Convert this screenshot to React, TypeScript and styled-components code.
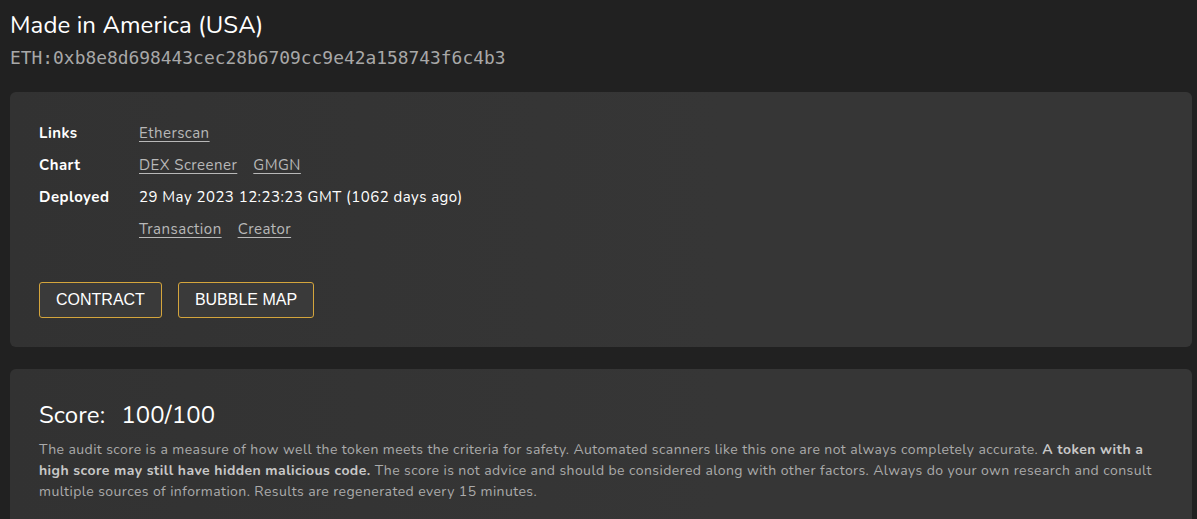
import React from "react";
import styled, { createGlobalStyle } from "styled-components";

const Global = createGlobalStyle`
  html, body { margin: 0; padding: 0; background: #212121; }
  body { font-family: "Nunito", "Lato", "Noto Sans", sans-serif; color: #fff; }
`;

const Page = styled.div`
  padding: 9px 5px 0 10px;
  display: flex;
  flex-direction: column;
`;

const Title = styled.h1`
  margin: 0;
  font-size: 24px;
  font-weight: 400;
  line-height: 32px;
  letter-spacing: 0.1px;
  color: #fff;
`;

const Address = styled.div`
  font-family: "DejaVu Sans Mono", monospace;
  font-size: 17.9px;
  line-height: 24px;
  color: #a8a8a8;
  margin-top: 5px;
`;

const Card = styled.section<{ $top: number }>`
  margin-top: ${(p) => p.$top}px;
  background: linear-gradient(90deg, #323232 0%, #363636 60%, #363636 100%);
  border-radius: 6px;
  padding: 25px 29px 29px;
`;

const Table = styled.div`
  display: grid;
  grid-template-columns: 100px 1fr;
  grid-auto-rows: 32px;
  align-items: center;
  font-size: 15px;
  letter-spacing: 0.47px;
`;

const Label = styled.div`
  font-weight: 700;
  color: #fff;
`;

const Value = styled.div`
  display: flex;
  gap: 16px;
  color: #fff;
`;

const Link = styled.a`
  color: #b8b8b8;
  text-decoration: underline;
  text-underline-offset: 3px;
  cursor: pointer;
`;

const Buttons = styled.div`
  display: flex;
  gap: 16px;
  margin-top: 37px;
`;

const Button = styled.button`
  font-family: "Liberation Sans", Arial, sans-serif;
  font-size: 16px;
  color: #fff;
  background: #3a3a3a;
  border: 1px solid #d4a53c;
  border-radius: 3px;
  height: 36px;
  padding: 0 16px;
  cursor: pointer;
`;

const ScoreCard = styled(Card)`
  padding-top: 31px;
  flex: 1;
`;

const Score = styled.div`
  display: flex;
  gap: 16px;
  font-size: 24px;
  line-height: 30px;
  letter-spacing: 0.1px;
`;

const Paragraph = styled.p`
  margin: 9px 0 0;
  font-size: 14px;
  line-height: 21px;
  letter-spacing: 0.42px;
  color: #ababab;
  b { color: #c8c8c8; }
`;

export default function App() {
  return (
    <>
      <Global />
      <Page>
        <Title>Made in America (USA)</Title>
        <Address>ETH:0xb8e8d698443cec28b6709cc9e42a158743f6c4b3</Address>
        <Card $top={22}>
          <Table>
            <Label>Links</Label>
            <Value><Link>Etherscan</Link></Value>
            <Label>Chart</Label>
            <Value><Link>DEX Screener</Link><Link>GMGN</Link></Value>
            <Label>Deployed</Label>
            <Value>29 May 2023 12:23:23 GMT (1062 days ago)</Value>
            <div />
            <Value><Link>Transaction</Link><Link>Creator</Link></Value>
          </Table>
          <Buttons>
            <Button>CONTRACT</Button>
            <Button>BUBBLE MAP</Button>
          </Buttons>
        </Card>
        <ScoreCard $top={22}>
          <Score><span>Score:</span><span>100/100</span></Score>
          <Paragraph>
            The audit score is a measure of how well the token meets the criteria for safety. Automated scanners like this one are not always completely accurate. <b>A token with a high score may still have hidden malicious code.</b> The score is not advice and should be considered along with other factors. Always do your own research and consult multiple sources of information. Results are regenerated every 15 minutes.
          </Paragraph>
        </ScoreCard>
      </Page>
    </>
  );
}
